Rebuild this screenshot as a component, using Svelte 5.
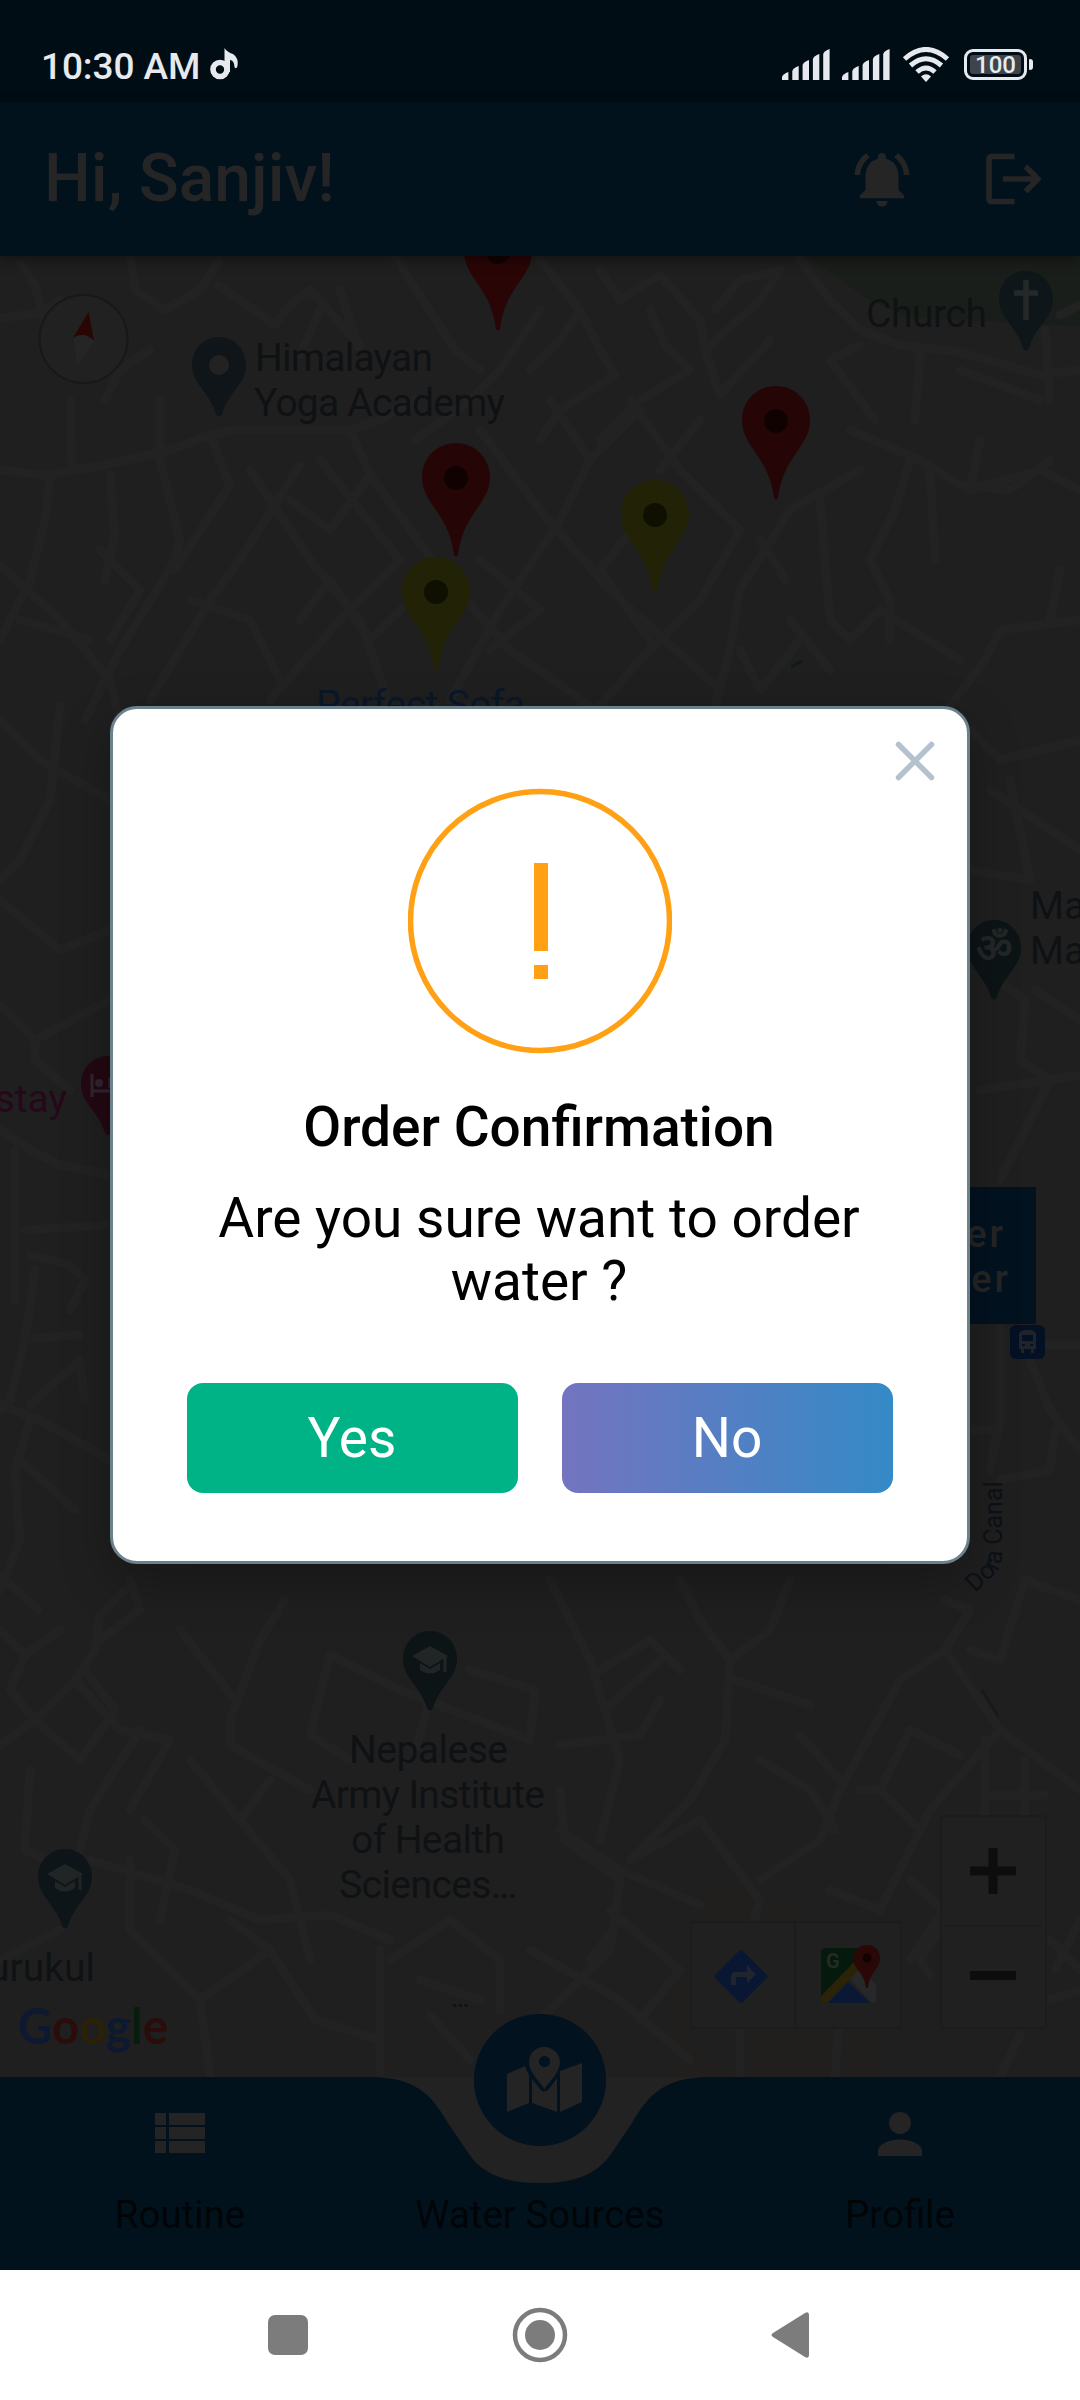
<script>
  const roads = [
    'M20 262L35 285L45 325M0 318L40 313L60 300M130 256L135 290L165 310L200 290L218 262M218 285L275 325L290 305L310 290L360 345M395 256L455 350L480 370M340 290L360 350M300 355L320 310M540 310L500 370L470 400L415 440M105 400L120 370L150 350M540 260L580 310L600 350L615 375L560 410L540 440M580 310L560 340L530 370',
    'M600 270L620 300L660 275L700 320L705 350L760 300L780 270L740 280L715 310M650 310L665 345L690 370L640 400L600 440M705 350L720 395L770 340M800 260L830 300L860 330L900 345L960 352L1040 375L1080 370M860 345L830 360L860 400L875 420M920 355L915 420M960 370L1040 400M1045 330L1050 400M1060 315L1080 305',
    'M0 470L45 475L100 466L170 450L210 435L235 430L350 430L380 420L415 400M160 400L160 460L180 540L175 560L120 650L85 720M70 400L72 465M50 475L45 520L30 580L0 640M110 475L115 535L105 580M210 435L230 485L175 570M300 465L240 560L210 600L150 700M320 460L400 560L340 620L270 700',
    'M350 430L370 475L440 570L510 650L590 706M370 475L330 530L290 500M480 430L540 510L610 590L720 690M550 400L590 460L560 520L500 610L450 700M630 400L680 470L740 530M590 460L640 410M740 530L700 600L640 660L600 706M860 470L790 510L740 590L730 650L715 706M850 430L920 460L960 485L1010 490L1050 460',
    'M910 460L895 510L870 560L890 600L890 640M980 440L970 490L1040 470L1080 490M930 470L935 560M1080 620L1000 630L985 660L950 706M0 565L60 620L110 680L120 720M20 620L90 640M250 470L310 560L360 620L390 706M190 600L250 620L280 680M100 550L140 590L110 640M300 620L330 580L370 640L410 600M480 560L540 610L490 650',
    'M640 520L600 570L650 640M760 540L780 570L785 580M820 500L830 620L850 640L880 610L960 660M790 620L830 670M740 650L760 690L800 640M1060 570L1050 620M700 420L660 470',
    'M0 720L40 760L110 800M60 706L50 800L20 860L0 880M0 900L60 950L110 930M0 1005L35 1040L110 1000M35 1040L35 1060L70 1090M0 1130L30 1150L60 1165L110 1175M15 1150L15 1300M25 1230L110 1225M30 1255L70 1265L85 1280L70 1310M35 1270L25 1340L10 1400L0 1410M35 1338L80 1335M30 1405L80 1360L85 1400M0 1405L40 1420L110 1460M30 1420L15 1470L20 1540L0 1590M20 1460L75 1510',
    'M970 730L1000 760L1080 740M990 790L1080 850M1010 780L1030 880L970 870M970 960L1025 1000L1020 1060L1050 1080L1080 1075M980 1090L1050 1080L1000 1180M1035 990L1080 1020M1000 1330L1000 1420L990 1470M1040 1345L1080 1345M1030 1360L1050 1410L1080 1450M1055 1430L1050 1470L1000 1480M970 1430L995 1430',
    'M0 1575L38 1610M0 1630L25 1655L60 1630M25 1655L10 1690L35 1720L75 1680L95 1650L100 1615L125 1590M75 1680L120 1730L170 1740M35 1720L80 1760L115 1710L85 1670M0 1745L35 1720M130 1580L140 1610L100 1640M180 1630L235 1700M285 1600L260 1640L230 1720L230 1745L310 1790M170 1740L130 1810M140 1730L90 1810L80 1850M30 1770L25 1850L90 1880',
    'M190 1760L240 1820L290 1880L310 1960M240 1820L270 1780M90 1860L190 1890L260 1920L330 1915L390 1940M145 1820L175 1850L160 1920M330 1655L400 1690L530 1740M330 1655L310 1735L350 1760M530 1740L535 1690L470 1670M430 1700L415 1750M130 1860L130 1930L200 2000L210 2077M200 2000L270 1950L315 2020L380 2040M270 1950L230 1920M380 1950L380 2077M390 1960L450 1920L500 1960L500 2010M420 1980L480 2000M430 2015L470 2060M0 1960L60 1930',
    'M550 1580L590 1660L620 1760L600 1840M600 1670L650 1640L680 1670M610 1705L660 1660M680 1580L700 1620L730 1660L725 1740L690 1800L630 1860L700 1820L760 1900L745 1950M730 1660L770 1630L790 1580M735 1680L810 1705M560 1745L640 1735L660 1700M560 1830L620 1870L700 1905M760 1880L820 1840L840 1790L900 1680L945 1650L970 1610L945 1600M945 1650L1000 1730L1080 1790M760 1760L810 1790L835 1830M800 1735L840 1780',
    'M970 1650L1000 1660L1025 1580M1025 1580L1080 1600M1000 1730L930 1810L880 1910L830 1890M880 1790L920 1830L905 1860M860 1790L880 1790L910 1730L960 1755M985 1740L985 1820M1025 1760L1025 1830M985 1795L1045 1795M560 1790L565 1840L620 1880L610 1950L540 2020M610 1910L680 1970L640 2020M530 1950L620 2000L690 2060M620 1920L590 1960M740 2030L740 2077M838 2030L835 2077M910 1880L950 1915L920 1960L930 1975M950 1900L910 1960M1080 1920L1055 1970M1050 2000L1080 1990M1050 1940L1080 1970M1020 2035L1000 2077'
  ];

  const wells = [
    { x: 498, y: 217, fill: '#2a0506' },
    { x: 456, y: 443, fill: '#260506' },
    { x: 776, y: 386, fill: '#260506' },
    { x: 655, y: 480, fill: '#222206' },
    { x: 436, y: 557, fill: '#222206' }
  ];

  const bars = [8, 14, 20, 26, 31];
</script>

{#snippet placePin(x, y, fill)}
  <path transform="translate({x} {y})" {fill} d="M0 0C-15 0-27 12-27 28C-27 47-10 54-3 77Q0 82 3 77C10 54 27 47 27 28C27 12 15 0 0 0Z" />
{/snippet}

{#snippet cap(x, y)}
  <g transform="translate({x} {y})">
    <path fill="#222525" d="M0-13L18-3L0 8L-18-3ZM-10 4L0 10L10 4V11Q0 18-10 11Z" />
    <path class="line" stroke="#222525" stroke-width="3" d="M15-2V13" />
  </g>
{/snippet}

{#snippet signal()}
  <svg width="48" height="32" viewBox="0 0 48 32">
    {#each bars as h, i}
      <path fill="#e6eaee" d="M{i * 10.3} {32 - h + 5}Q{i * 10.3 + 1} {32 - h + 2} {i * 10.3 + 6.4} {32 - h}V32H{i * 10.3}Z" />
    {/each}
  </svg>
{/snippet}

<div class="phone">
  <div class="status">
    <div class="clock">
      <span>10:30 AM</span>
      <svg width="30" height="34" viewBox="0 0 30 34">
        <circle cx="10" cy="22.5" r="7" fill="none" stroke="#e6eaee" stroke-width="5.6" />
        <path fill="#e6eaee" d="M14.5 1Q17 5 23 7Q29 11 27.5 19Q26 23 24.5 20Q24 13 20 13V25H14.5Z" />
      </svg>
    </div>
    <div class="indicators">
      {@render signal()}
      {@render signal()}
      <svg class="wifi" width="48" height="36" viewBox="0 0 48 36">
        <g fill="none" stroke="#e6eaee" stroke-width="5">
          <path d="M2.5 12Q24-7 45.5 12" /><path d="M8.5 18.5Q24 5 39.5 18.5" /><path d="M15 25Q24 17 33 25" />
        </g>
        <path fill="#e6eaee" d="M19 29.5Q24 25 29 29.5L24 35Z" />
      </svg>
      <div class="battery"><span>100</span></div>
    </div>
  </div>

  <header>
    <h1>Hi, Sanjiv!</h1>
    <div class="actions">
      <svg width="66" height="66" viewBox="0 0 24 24">
        <path fill="#252525" d="M7.58 4.08 6.15 2.65C3.75 4.48 2.17 7.3 2.03 10.5h2c.15-2.65 1.51-4.97 3.55-6.42zm12.39 6.42h2c-.15-3.2-1.73-6.02-4.12-7.85l-1.42 1.43c2.02 1.45 3.39 3.77 3.54 6.42zM18 11c0-3.07-1.64-5.64-4.5-6.32V4c0-.83-.67-1.5-1.5-1.5s-1.5.67-1.5 1.5v.68C7.63 5.36 6 7.92 6 11v5l-2 2v1h16v-1l-2-2v-5zm-6 11c1.1 0 2-.7 2-2h-4c0 1.3.9 2 2 2z" />
      </svg>
      <svg width="56" height="52" viewBox="0 0 56 52">
        <path fill="none" stroke="#252525" stroke-width="5.6" stroke-linejoin="round" d="M28.5 3.5H6Q3 3.5 3 6.500V45.500Q3 48.500 6 48.500H28.500M17 26H51M39.500 13.500L52 26L39.500 38.500" />
      </svg>
    </div>
  </header>

  <main>
    <svg class="map" width="1080" height="1821" viewBox="0 256 1080 1821">
      <path fill="#1a1e1a" d="M805 256L870 300L910 318L1000 322L1080 326V256Z" />
      <path fill="#201f1d" d="M710 1885L745 1890V1922H704ZM765 1900L800 1905V1922H762ZM672 1980H691V2050H700L740 2077H672ZM745 2034H830V2077H745ZM845 2034H880V2077H845Z" />
      <g class="roads">
        {#each roads as d}<path {d} />{/each}
      </g>
      <path class="line" stroke="#101a19" stroke-width="3" d="M791 667L802 661" />
      <path class="line" stroke="#181818" stroke-width="2" d="M982 1690L998 1716" />

      <circle cx="83.500" cy="339" r="44" fill="#212121" stroke="#181818" stroke-width="2" />
      <path fill="#290504" d="M88.500 312L94 341Q84 331 73 338Z" />
      <path fill="#252525" d="M73 338Q84 331 94 341L77 367Z" />

      {#each wells as w}
        <g transform="translate({w.x} {w.y})">
          <path fill={w.fill} d="M0 0C-19 0-34 15-34 34C-34 61-7 70-2 112Q0 115 2 112C7 70 34 61 34 34C34 15 19 0 0 0Z" />
          <circle cx="0" cy="35" r="12" fill="#000" fill-opacity=".55" />
        </g>
      {/each}

      {@render placePin(219, 337, '#0f1518')}
      <circle cx="219" cy="365" r="10" fill="#222" />
      {@render placePin(1026, 271, '#0e161a')}
      <path class="line" stroke="#252828" stroke-width="5.500" d="M1026 280V320M1014 293H1038" />
      {@render placePin(994, 920, '#0d1416')}
      <text class="om" x="994" y="962" text-anchor="middle">ॐ</text>
      {@render placePin(108, 1056, '#220812')}
      <path class="line" stroke="#302430" stroke-width="3" d="M92 1074V1097M92 1091H120M110 1088V1079H122" />
      <circle cx="99" cy="1083" r="4" fill="#302430" />
      {@render placePin(430, 1631, '#0d1415')}
      {@render cap(430, 1659)}
      {@render placePin(65, 1849, '#0e1518')}
      {@render cap(65, 1877)}

      <g class="label">
        <text x="255" y="371" textLength="178">Himalayan</text>
        <text x="254" y="416" textLength="251">Yoga Academy</text>
        <text x="866" y="327" textLength="121">Church</text>
        <text x="1030" y="919">Ma</text>
        <text x="1030" y="964">Ma</text>
        <text x="349" y="1763" textLength="159">Nepalese</text>
        <text x="311" y="1808" textLength="234">Army Institute</text>
        <text x="351" y="1853" textLength="154">of Health</text>
        <text x="339" y="1898" textLength="178">Sciences…</text>
        <text x="95" y="1981" text-anchor="end">urukul</text>
        <text class="dots" x="451" y="2007">…</text>
        <text class="shop" x="316" y="718" textLength="209">Perfect Sofa</text>
        <text class="stay" x="67" y="1112" text-anchor="end">stay</text>
      </g>
      <path id="canal" fill="none" d="M975 1593L996 1573Q1003 1565 1002 1546V1450" />
      <text class="canal"><textPath href="#canal">Dora Canal</textPath></text>

      <rect x="900" y="1187" width="136" height="137" fill="#02121f" />
      <g class="order">
        <text x="1006" y="1247" text-anchor="end">Order</text>
        <text x="1011" y="1292" text-anchor="end">Water</text>
      </g>
      <rect x="1010" y="1325" width="35" height="34" rx="6" fill="#041024" />
      <path fill="#20242a" fill-rule="evenodd" d="M1019 1334Q1019 1330 1027.500 1330T1036 1334V1349H1034V1353H1031V1349H1024V1353H1021V1349H1019ZM1022 1335V1341H1033V1335ZM1022 1344V1346H1025V1344ZM1030 1344V1346H1033V1344Z" />

      <text class="google" x="18" y="2044" textLength="150" lengthAdjust="spacingAndGlyphs"><tspan fill="#0d1930">G</tspan><tspan fill="#2a0d0a">o</tspan><tspan fill="#2a2107">o</tspan><tspan fill="#0d1930">g</tspan><tspan fill="#071e0e">l</tspan><tspan fill="#2a0d0a">e</tspan></text>

      <g class="control">
        <rect x="691" y="1922" width="210" height="106" rx="3" />
        <path d="M795 1922V2028" />
        <rect x="941" y="1816" width="105" height="212" rx="3" />
        <path d="M945 1926H1042" />
      </g>
      <path class="line" stroke="#0d0d0d" stroke-width="9" d="M970 1871H1016M993 1848V1894M970 1975.500H1016" />
      <path stroke="#0a1733" fill="#0a1733" stroke-width="4" stroke-linejoin="round" d="M741 1952L765.500 1976.500L741 2001L716.500 1976.500Z" />
      <path fill="#20252d" d="M731 1985V1977Q731 1972 736 1972H747V1965L756 1974.500L747 1983V1977H736V1985Z" />
      <g>
        <path fill="#06190d" d="M821 1953Q821 1948 826 1948H870L821 2003Z" />
        <path fill="#2a2308" d="M821 1996L856 1960L863 1967L826 2003H821Z" />
        <path fill="#0b1833" d="M848 1982L870 2003H828Z" />
        <path fill="#272829" d="M850 1979L860 1969L876 1985V2001L872 2003Z" />
        <path fill="#290807" d="M867 1945C859 1945 853 1951 853 1958C853 1969 864 1971 866 1988H868C870 1971 880 1969 880 1958C880 1951 875 1945 867 1945Z" />
        <circle cx="867" cy="1958" r="4.500" fill="#120303" />
        <text class="gmark" x="826" y="1968">G</text>
      </g>
    </svg>
  </main>

  <nav>
    <svg class="navshape" width="1080" height="193" viewBox="0 2077 1080 193">
      <path fill="#222" d="M360 2077H720V2200H360Z" />
      <path fill="#02121d" d="M0 2077H370C419 2077 433 2098 448 2123L469 2154C484 2176 508 2183 540 2183S596 2176 611 2154L632 2123C647 2098 661 2077 710 2077H1080V2270H0Z" />
      <circle cx="540" cy="2080" r="66" fill="#02121f" />
      <g transform="translate(507 2047)">
        <path fill="#242424" d="M0 27L18 19Q20 25 22 28V56L0 65ZM25 32L33 42Q37 47 42 42L50 31V65L25 56ZM53 24L75 16V55L53 65Z" />
        <path fill="#242424" fill-rule="evenodd" d="M37.500 0C28 0 22 7 22 15C22 24 30 32 37.500 42C45 32 53 24 53 15C53 7 46 0 37.500 0ZM37.500 9A5.500 5.500 0 1 1 37.400 9Z" />
      </g>
    </svg>
    <div class="tabs">
      <div class="tab">
        <svg width="52" height="44" viewBox="0 0 52 44"><path fill="#242424" d="M1 1H12V13H1ZM15 1H51V13H15ZM1 15H12V27H1ZM15 15H51V27H15ZM1 29H12V41H1ZM15 29H51V41H15Z" /></svg>
        <span>Routine</span>
      </div>
      <div class="tab"><svg width="52" height="44"></svg><span>Water Sources</span></div>
      <div class="tab">
        <svg width="44" height="44" viewBox="0 0 44 44"><circle cx="22" cy="11" r="11" fill="#242424" /><path fill="#242424" d="M0 44V39C0 31 14 27.500 22 27.500S44 31 44 39V44Z" /></svg>
        <span>Profile</span>
      </div>
    </div>
  </nav>

  <footer>
    <svg width="540" height="56" viewBox="0 0 540 56">
      <g fill="#7c7c7c">
        <rect y="8" width="40" height="40" rx="7" />
        <circle cx="272" cy="28" r="15" />
        <path d="M505 26L537 6Q541 4 541 8V48Q541 52 537 50L505 30Q502 28 505 26Z" />
      </g>
      <circle cx="272" cy="28" r="25" fill="none" stroke="#7c7c7c" stroke-width="4.500" />
    </svg>
  </footer>

  <section class="dialog">
    <svg class="close" width="40" height="40" viewBox="0 0 40 40"><path d="M3.500 3.500L36.500 36.500M36.500 3.500L3.500 36.500" /></svg>
    <svg class="alert" width="264" height="266" viewBox="0 0 264 266">
      <circle cx="132" cy="133" r="129.500" fill="none" stroke="#ffa015" stroke-width="5.500" />
      <path fill="#ffa015" d="M126 75H140V163H126ZM126 177H140V191H126Z" />
    </svg>
    <h2>Order Confirmation</h2>
    <p>Are you sure want to order water ?</p>
    <div class="buttons">
      <button class="yes">Yes</button>
      <button class="no">No</button>
    </div>
  </section>
</div>

<style>
  :global(body) { margin: 0; }
  .phone {
    position: relative;
    display: flex;
    flex-direction: column;
    width: 1080px;
    height: 2400px;
    overflow: hidden;
    background: #1f1f1f;
    font-family: Roboto, sans-serif;
  }
  svg { display: block; flex: none; }
  h1, h2, p { margin: 0; font-weight: 500; }

  .status {
    display: flex;
    justify-content: space-between;
    height: 102px;
    padding: 0 46px 0 41px;
    box-sizing: border-box;
    background: #010d15;
    color: #e6eaee;
  }
  .clock { display: flex; gap: 8px; padding-top: 47px; }
  .clock span { font-size: 37px; font-weight: 500; line-height: 39px; letter-spacing: -.1px; width: 161px; white-space: nowrap; }
  .indicators { display: flex; gap: 12px; padding-top: 48px; }
  .wifi { margin-top: -1px; }
  .battery {
    position: relative;
    width: 63px;
    height: 31px;
    box-sizing: border-box;
    border: 3px solid #e6eaee;
    border-radius: 9px;
    padding: 3px;
    margin: 1px 7px 0 2px;
  }
  .battery span {
    display: block;
    height: 19px;
    border-radius: 3px;
    background: #3d444b;
    font-size: 24px;
    line-height: 20px;
    font-weight: 500;
    text-align: center;
  }
  .battery::after {
    content: '';
    position: absolute;
    right: -9px;
    top: 7px;
    width: 4px;
    height: 11px;
    border-radius: 1px 3px 3px 1px;
    background: #e6eaee;
  }

  header {
    position: relative;
    z-index: 1;
    display: flex;
    align-items: center;
    justify-content: space-between;
    height: 154px;
    padding: 0 38px 0 44px;
    box-sizing: border-box;
    background: #02121d;
    box-shadow: 0 4px 12px #0006;
  }
  h1 { color: #252525; font-size: 66px; line-height: 78px; }
  .actions { display: flex; align-items: center; gap: 71px; }

  main { height: 1821px; }
  .roads { fill: none; stroke: #222222; stroke-width: 9; stroke-linejoin: round; stroke-linecap: round; }
  .line { fill: none; }
  .label { font-size: 39px; fill: #0f1214; }
  .label .dots { font-size: 26px; font-weight: 500; }
  .label .shop { fill: #0a1728; }
  .label .stay { fill: #26081a; }
  .om { font-size: 40px; fill: #222627; font-weight: 700; }
  .canal { font-size: 25px; fill: #0c1118; }
  .order { font-size: 38px; font-weight: 500; letter-spacing: 3px; fill: #252525; }
  .google { font-family: Lato, sans-serif; font-size: 50px; font-weight: 700; }
  .gmark { font-size: 20px; font-weight: 700; fill: #232b26; }
  .control { fill: #202020; fill-opacity: .9; stroke: #1c1c1c; stroke-width: 2; }

  nav { position: relative; height: 193px; }
  .navshape { position: absolute; left: 0; top: 0; overflow: visible; }
  .tabs { position: relative; display: grid; grid-template-columns: repeat(3, 360px); padding-top: 35px; }
  .tab { display: flex; flex-direction: column; align-items: center; gap: 12px; }
  .tab span { color: #010507; font-size: 38.500px; line-height: 94px; height: 94px; }

  footer { display: flex; justify-content: center; align-items: center; height: 130px; background: #fff; }
  footer svg { overflow: visible; margin-left: -4px; }

  .dialog {
    position: absolute;
    z-index: 2;
    left: 110px;
    top: 706px;
    width: 860px;
    height: 858px;
    box-sizing: border-box;
    border: 3px solid #6b828c;
    border-radius: 27px;
    background: #fff;
    box-shadow: 0 18px 50px #0004;
    display: flex;
    flex-direction: column;
    align-items: center;
  }
  .close { align-self: flex-end; margin: 32px 32px 0 0; }
  .close path { stroke: #b4c2cf; stroke-width: 5.500; stroke-linecap: round; }
  .alert { margin-top: 7px; }
  h2 { margin-top: 41px; font-size: 55px; line-height: 64px; color: #000; }
  p { margin-top: 28px; width: 700px; font-size: 55px; font-weight: 400; line-height: 63px; text-align: center; color: #000; }
  h2, p { transform: translateX(-1px); }
  .buttons { display: flex; gap: 44px; margin-top: 70px; }
  button {
    width: 331px;
    height: 110px;
    padding: 0 1px 0 0;
    border: 0;
    border-radius: 16px;
    color: #fff;
    font: 400 55px/110px Roboto, sans-serif;
  }
  .yes { background: #00b386; }
  .no { background: linear-gradient(90deg, #7474bf, #348ac7); }
</style>
